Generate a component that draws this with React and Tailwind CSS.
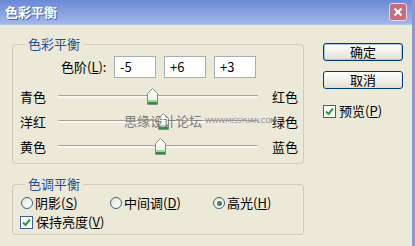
import React from "react";

const FONT = { fontFamily: '"Noto Sans CJK SC", "Liberation Sans", sans-serif' };

function Thumb({ value }) {
  const center = 100 + value; // track 200px, range -100..100
  return (
    <div className="absolute top-[4px]" style={{ left: center - 6 }}>
      <svg width="11" height="17" viewBox="0 0 11 17">
        <defs>
          <linearGradient id="tg" x1="0" y1="0" x2="0" y2="1">
            <stop offset="0" stopColor="#ffffff" />
            <stop offset="1" stopColor="#e4f1e2" />
          </linearGradient>
        </defs>
        <path d="M0.5 5.5 L5.5 0.5 L10.5 5.5 V16.5 H0.5 Z" fill="url(#tg)" stroke="#8a8a7e" />
        <rect x="1" y="12" width="9" height="2" fill="#9fd6a6" />
        <rect x="1" y="14" width="9" height="2" fill="#2f8f3e" />
      </svg>
    </div>
  );
}

function SliderRow({ left, right, value }) {
  return (
    <div className="flex items-center h-[25px] pl-[7px]">
      <span className="w-[38px] text-[13px] leading-[16px] text-black">{left}</span>
      <div className="relative w-[200px] h-[25px] flex items-center">
        <div className="w-full h-[3px] border-t border-[#a8a597] bg-[#f7f6f0] rounded-[1px]" />
        <Thumb value={value} />
      </div>
      <span className="ml-[14px] text-[13px] leading-[16px] text-black">{right}</span>
    </div>
  );
}

function Radio({ checked, label, u }) {
  return (
    <div className="flex items-center">
      <div className="w-[12px] h-[12px] rounded-full border border-[#3d5f8a] bg-gradient-to-br from-[#e6e6de] to-white flex items-center justify-center">
        {checked && <div className="w-[5px] h-[5px] rounded-full bg-[#3f8a45]" />}
      </div>
      <span className="ml-[2px] text-[13px] leading-[16px] text-black">
        {label}(<span className="underline">{u}</span>)
      </span>
    </div>
  );
}

function Check() {
  return (
    <div className="w-[13px] h-[13px] border border-[#3d5f8a] bg-white flex items-center justify-center">
      <svg width="9" height="9" viewBox="0 0 9 9">
        <path d="M1 4.5 L3.5 7 L8 1.5" fill="none" stroke="#2a9a3a" strokeWidth="2" />
      </svg>
    </div>
  );
}

function Button({ children, def }) {
  return (
    <div
      className={
        "w-[80px] h-[18px] rounded-[3px] border border-[#003c74] bg-gradient-to-b from-white to-[#e3e1d4] flex items-center justify-center text-[13px] leading-[16px] text-black " +
        (def ? "shadow-[inset_0_0_0_1px_#a9c4f0]" : "")
      }
    >
      {children}
    </div>
  );
}

export default function App() {
  return (
    <div
      className="relative w-[415px] h-[246px] bg-[#ece9d8] flex flex-col overflow-hidden border-r-[3px] border-[#7f9be0]"
      style={FONT}
    >
      {/* title bar */}
      <div className="h-[25px] flex items-center pl-[5px] pr-[5px] bg-gradient-to-b from-[#6b8ad6] to-[#a2b7ea] border-b border-[#b6c4e6]">
        <span className="text-[13px] leading-[16px] font-bold text-white [text-shadow:1px_1px_0_#4d67a8]">色彩平衡</span>
        <div className="ml-auto w-[18px] h-[18px] rounded-[3px] border border-[#f0d6de] bg-[#c2707f] flex items-center justify-center">
          <svg width="10" height="10" viewBox="0 0 10 10">
            <path d="M1.5 1.5 L8.5 8.5 M8.5 1.5 L1.5 8.5" stroke="#ffffff" strokeWidth="2" />
          </svg>
        </div>
      </div>

      <div className="flex flex-1">
        {/* left column */}
        <div className="flex flex-col pl-[12px] w-[304px]">
          <fieldset className="mt-[11px] w-[292px] border border-[#cfccbc] rounded-[3px] pb-[4px]">
            <legend className="ml-[12px] px-[3px] text-[13px] leading-[16px] text-[#1e50a2]">色彩平衡</legend>
            <div className="flex items-center h-[22px] mt-[4px] pl-[48px]">
              <span className="w-[53px] text-[13px] leading-[16px] text-black">
                色阶(<span className="underline">L</span>):
              </span>
              <div className="flex gap-[8px]">
                {["-5", "+6", "+3"].map((v) => (
                  <div
                    key={v}
                    className="w-[42px] h-[22px] border border-[#a9aeb5] bg-white flex items-center pl-[5px] text-[13px] leading-[16px] text-black"
                  >
                    {v}
                  </div>
                ))}
              </div>
            </div>
            <div className="mt-[6px] flex flex-col">
              <SliderRow left="青色" right="红色" value={-5} />
              <SliderRow left="洋红" right="绿色" value={6} />
              <SliderRow left="黄色" right="蓝色" value={3} />
            </div>
          </fieldset>

          <fieldset className="mt-[12px] w-[292px] border border-[#cfccbc] rounded-[3px] pb-[4px]">
            <legend className="ml-[12px] px-[3px] text-[13px] leading-[16px] text-[#1e50a2]">色调平衡</legend>
            <div className="flex items-center h-[22px] pl-[8px]">
              <div className="w-[89px]">
                <Radio label="阴影" u="S" />
              </div>
              <div className="w-[103px]">
                <Radio label="中间调" u="D" />
              </div>
              <Radio checked label="高光" u="H" />
            </div>
            <div className="flex items-center h-[16px] pl-[7px]">
              <Check />
              <span className="ml-[3px] text-[13px] leading-[16px] text-black">
                保持亮度(<span className="underline">V</span>)
              </span>
            </div>
          </fieldset>
        </div>

        {/* right column */}
        <div className="flex flex-col pl-[19px] pt-[18px]">
          <Button def>确定</Button>
          <div className="mt-[10px]">
            <Button>取消</Button>
          </div>
          <div className="mt-[14px] flex items-center">
            <Check />
            <span className="ml-[3px] text-[13px] leading-[16px] text-black">
              预览(<span className="underline">P</span>)
            </span>
          </div>
        </div>
      </div>

      {/* watermark */}
      <div className="absolute z-10 left-[124px] top-[113px] flex items-center pointer-events-none">
        <span className="text-[13px] leading-[16px] text-[#7c7c7c]">思缘设计论坛</span>
        <span
          className="ml-[3px] text-[7px] leading-[16px] tracking-[-0.4px] text-[#8a8a8a]"
          style={{ fontFamily: '"DejaVu Sans", sans-serif' }}
        >
          WWW.MISSYUAN.COM
        </span>
      </div>
    </div>
  );
}
